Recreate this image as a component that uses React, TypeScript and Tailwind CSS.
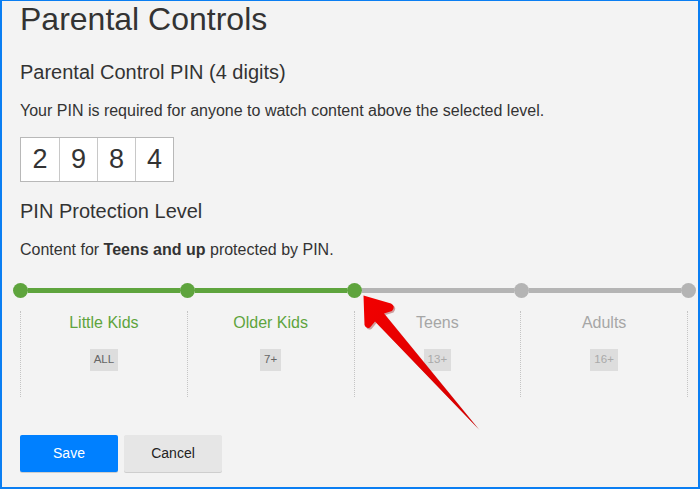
import React from "react";

const levels = [
  { name: "Little Kids", badge: "ALL", active: true },
  { name: "Older Kids", badge: "7+", active: true },
  { name: "Teens", badge: "13+", active: false },
  { name: "Adults", badge: "16+", active: false },
];

function Dot({ active }: { active: boolean }) {
  return (
    <div
      className={
        "w-[15px] h-[15px] rounded-full shrink-0 " +
        (active ? "bg-[#5ea43d]" : "bg-[#b4b4b4]")
      }
    />
  );
}

function Bar({ active }: { active: boolean }) {
  return (
    <div
      className={
        "flex-1 h-[5px] " + (active ? "bg-[#5ea43d]" : "bg-[#b4b4b4]")
      }
    />
  );
}

export default function App() {
  return (
    <div
      className="relative w-[700px] h-[489px] overflow-hidden bg-[#f3f3f3] border-[#0a7ef2] border-t border-l-2 border-r-2 border-b-2 text-[#333]"
      style={{ fontFamily: '"Liberation Sans", Arial, sans-serif' }}
    >
      <div className="pl-[18px] pr-[10px] flex flex-col">
        <h1 className="text-[32px] leading-[36px] mt-[0px] font-normal">Parental Controls</h1>
        <h2 className="text-[20px] leading-[24px] mt-[23px] font-normal">
          Parental Control PIN (4 digits)
        </h2>
        <p className="text-[16px] leading-[20px] mt-[17px] text-[#333]">
          Your PIN is required for anyone to watch content above the selected level.
        </p>
        <div className="flex mt-[16px]">
          <div className="flex border border-[#b8b8b8] bg-white">
            {["2", "9", "8", "4"].map((d, i) => (
              <div
                key={i}
                className={
                  "w-[38px] h-[43px] flex items-center justify-center text-[27px] text-[#333] " +
                  (i > 0 ? "border-l border-[#c8c8c8]" : "")
                }
              >
                {d}
              </div>
            ))}
          </div>
        </div>
        <h2 className="text-[20px] leading-[24px] mt-[17px] font-normal">PIN Protection Level</h2>
        <p className="text-[16px] leading-[20px] mt-[17px]">
          Content for <span className="font-bold">Teens and up</span> protected by PIN.
        </p>
        <div className="flex items-center mt-[23px] mx-[-7.5px]">
          <Dot active />
          <Bar active />
          <Dot active />
          <Bar active />
          <Dot active />
          <Bar active={false} />
          <Dot active={false} />
          <Bar active={false} />
          <Dot active={false} />
        </div>
        <div className="grid grid-cols-4 mt-[13px] h-[86px] border-r border-dotted border-[#c4c4c4]">
          {levels.map((l) => (
            <div
              key={l.name}
              className="border-l border-dotted border-[#c4c4c4] flex flex-col items-center"
            >
              <div
                className={
                  "text-[16px] leading-[20px] mt-[2px] " +
                  (l.active ? "text-[#5ea43d]" : "text-[#a6a6a6]")
                }
              >
                {l.name}
              </div>
              <div
                className={
                  "mt-[16px] h-[22px] px-[4px] flex items-center bg-[#dddddd] text-[11.5px] " +
                  (l.active ? "text-[#666]" : "text-[#aaa]")
                }
              >
                {l.badge}
              </div>
            </div>
          ))}
        </div>
        <div className="flex gap-[6px] mt-[38px]">
          <button className="w-[98px] h-[37px] rounded-[2px] bg-[#0080ff] text-white text-[14px] shadow-[0_1px_0_rgba(0,0,0,0.15)]">
            Save
          </button>
          <button className="w-[98px] h-[37px] rounded-[2px] bg-[#e6e6e6] text-[#222] text-[14px] shadow-[0_1px_0_rgba(0,0,0,0.15)]">
            Cancel
          </button>
        </div>
      </div>
      <svg
        className="absolute left-0 top-0 pointer-events-none"
        width="700"
        height="489"
        viewBox="0 0 700 489"
      >
        <defs>
          <linearGradient id="ar" x1="0" y1="0" x2="1" y2="1">
            <stop offset="0" stopColor="#f20000" />
            <stop offset="1" stopColor="#d40000" />
          </linearGradient>
        </defs>
        <path
          d="M361.5 294.5 L389 302.5 Q394 305 390 310 L382 312.5 L476.5 428 L373 320.5 L368 326.5 Q364 328.5 362.5 324 Z"
          fill="#8a0000"
          opacity="0.35"
          transform="translate(1.5,1.5)"
        />
        <path
          d="M361.5 294.5 L389 302.5 Q394 305 390 310 L382 312.5 L476.5 428 L373 320.5 L368 326.5 Q364 328.5 362.5 324 Z"
          fill="url(#ar)"
        />
      </svg>
    </div>
  );
}
